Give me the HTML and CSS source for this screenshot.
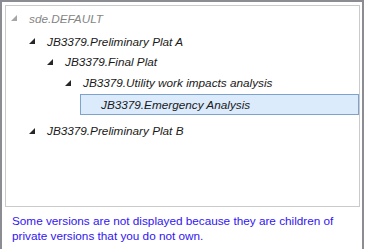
FILE: index.html
```html
<!DOCTYPE html>
<html lang="en">
<head>
    <meta charset="UTF-8">
    <meta name="viewport" content="width=device-width, initial-scale=1.0">
    <title>Versions</title>
    <link rel="stylesheet" href="styles.css">
</head>
<body>
    <div class="frame">
        <div class="tree">
            <div class="row row-root level-0">
                <span class="expander muted"><svg width="6" height="6" viewBox="0 0 6 6"><polygon points="6,0 6,6 0,6"/></svg></span>
                <span class="label muted">sde.DEFAULT</span>
            </div>
            <div class="row level-1 row-first">
                <span class="expander"><svg width="6" height="6" viewBox="0 0 6 6"><polygon points="6,0 6,6 0,6"/></svg></span>
                <span class="label">JB3379.Preliminary Plat A</span>
            </div>
            <div class="row level-2">
                <span class="expander"><svg width="6" height="6" viewBox="0 0 6 6"><polygon points="6,0 6,6 0,6"/></svg></span>
                <span class="label">JB3379.Final Plat</span>
            </div>
            <div class="row level-3">
                <span class="expander"><svg width="6" height="6" viewBox="0 0 6 6"><polygon points="6,0 6,6 0,6"/></svg></span>
                <span class="label">JB3379.Utility work impacts analysis</span>
            </div>
            <div class="row level-4 row-selected">
                <span class="label selected">JB3379.Emergency Analysis</span>
            </div>
            <div class="row level-1 row-last">
                <span class="expander"><svg width="6" height="6" viewBox="0 0 6 6"><polygon points="6,0 6,6 0,6"/></svg></span>
                <span class="label">JB3379.Preliminary Plat B</span>
            </div>
        </div>
        <p class="note">Some versions are not displayed because they are children of private versions that you do not own.</p>
    </div>
</body>
</html>
```

FILE: styles.css
```css
body {
    margin: 0;
    background: #ffffff;
    font-family: "Liberation Sans", Arial, sans-serif;
}

.frame {
    width: 355px;
    height: 247px;
    border: 2px solid #8c8d92;
    border-bottom: none;
    padding: 3px 2px 0 3px;
}

.tree {
    height: 199px;
    border: 1px solid #cacaca;
    padding-top: 1px;
}

.row {
    display: flex;
    align-items: center;
    height: 21px;
    font-size: 11.75px;
    font-style: italic;
    color: #1a1a1a;
}

.row-root {
    height: 22px;
}

.row-first {
    margin-top: 2px;
    height: 20px;
}

.row-selected {
    margin-top: 1px;
}

.row-last {
    margin-top: 5px;
}

.level-0 { padding-left: 0; }
.level-1 { padding-left: 18px; }
.level-2 { padding-left: 36px; }
.level-3 { padding-left: 54px; }
.level-4 { padding-left: 72px; }

.expander {
    width: 23px;
    display: flex;
    align-items: center;
    padding-left: 5px;
    box-sizing: border-box;
}

.expander svg {
    fill: #262626;
}

.expander.muted svg {
    fill: #a6a6a6;
}

.label.muted {
    color: #858585;
}

.label.selected {
    flex: 1;
    margin-left: 2px;
    padding-left: 20px;
    height: 19px;
    line-height: 19px;
    background: #dcebfc;
    border: 1px solid #7da2ce;
}

.note {
    margin: 6px 0 0 7px;
    font-size: 11.75px;
    line-height: 15px;
    color: #3015f0;
}
```
